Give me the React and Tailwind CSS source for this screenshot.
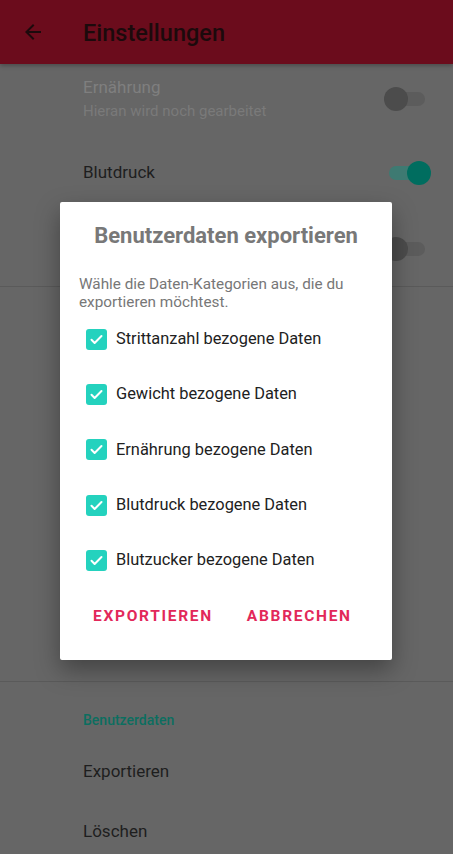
import React from "react";

function Switch({ on }) {
  return (
    <div className="relative w-[36px] h-[24px] flex items-center">
      <div className={`absolute left-0 right-0 h-[14px] rounded-full ${on ? "bg-[#3e7a72]" : "bg-[#5c5c5c]"}`} />
      <div
        className={`absolute w-[24px] h-[24px] rounded-full ${on ? "left-[18px] bg-[#006d5f]" : "left-[-5px] bg-[#4c4c4c]"}`}
      />
    </div>
  );
}

function Check() {
  return (
    <div className="w-[21px] h-[21px] rounded-[3px] bg-[#24d2be] flex items-center justify-center">
      <svg width="15" height="15" viewBox="0 0 24 24" fill="none" stroke="white" strokeWidth="3.2" strokeLinecap="round" strokeLinejoin="round">
        <path d="M4 12.5l5 5L20 6.5" />
      </svg>
    </div>
  );
}

export default function App() {
  const items = [
    "Strittanzahl bezogene Daten",
    "Gewicht bezogene Daten",
    "Ernährung bezogene Daten",
    "Blutdruck bezogene Daten",
    "Blutzucker bezogene Daten",
  ];
  return (
    <div className="relative w-[453px] h-[854px] overflow-hidden bg-[#666666]" style={{ fontFamily: "Roboto, 'Noto Sans', sans-serif" }}>
      <div className="h-[64px] bg-[#6b0c1c] flex items-center shadow-[0_2px_4px_rgba(0,0,0,0.25)]">
        <div className="w-[83px] flex justify-start pl-[21px]">
          <svg width="24" height="24" viewBox="0 0 24 24" fill="#1c0a0c">
            <path d="M20 11H7.83l5.59-5.59L12 4l-8 8 8 8 1.41-1.41L7.83 13H20v-2z" />
          </svg>
        </div>
        <div className="text-[23.5px] font-medium text-[#1c0a0c] pt-[3px]">Einstellungen</div>
      </div>

      <div className="pl-[83px] pr-[28px]">
        <div className="h-[66px] flex items-center justify-between pt-[4px]">
          <div className="flex flex-col">
            <div className="text-[17px] leading-[24px] text-[#7f7f7f]">Ernährung</div>
            <div className="text-[15px] leading-[24px] text-[#7a7a7a]">Hieran wird noch gearbeitet</div>
          </div>
          <Switch on={false} />
        </div>
        <div className="h-[80px] flex items-center justify-between pt-[5px]">
          <div className="text-[17px] text-[#1e1e1e]">Blutdruck</div>
          <Switch on={true} />
        </div>
        <div className="h-[74px] flex items-center justify-end pt-[4px]">
          <Switch on={false} />
        </div>
      </div>
      <div className="h-px bg-[#5a5a5a] mt-[2px]" />
      <div className="h-[394px]" />
      <div className="h-px bg-[#5a5a5a]" />
      <div className="pl-[83px]">
        <div className="h-[75px] flex items-center pt-[1px] text-[14px] font-medium text-[#0c6e60]">Benutzerdaten</div>
        <div className="h-[32px] flex items-center text-[17px] text-[#1e1e1e] -mt-[1px]">Exportieren</div>
        <div className="h-[88px] flex items-center text-[17px] text-[#1e1e1e]">Löschen</div>
      </div>

      <div className="absolute left-[60px] top-[202px] w-[332px] h-[458px] bg-white rounded-[2px] shadow-[0_10px_24px_rgba(0,0,0,0.35)] flex flex-col">
        <div className="pt-[20px] text-center text-[22px] font-bold text-[#787878] leading-[28px]">Benutzerdaten exportieren</div>
        <div className="px-[19px] pt-[25px] text-[15.3px] leading-[18px] text-[#777777]">
          Wähle die Daten-Kategorien aus, die du exportieren möchtest.
        </div>
        <div className="flex flex-col pt-[1px]">
          {items.map((t) => (
            <div key={t} className="h-[55.2px] flex items-center pl-[26px] gap-[9px]">
              <Check />
              <div className="text-[16.4px] text-[#212121]">{t}</div>
            </div>
          ))}
        </div>
        <div className="flex pl-[33px] gap-[34px] h-[56px] items-center pt-[2px]">
          <div className="text-[15.5px] font-bold tracking-[1.7px] text-[#e2285a]">EXPORTIEREN</div>
          <div className="text-[15.5px] font-bold tracking-[1.7px] text-[#e2285a]">ABBRECHEN</div>
        </div>
      </div>
    </div>
  );
}
